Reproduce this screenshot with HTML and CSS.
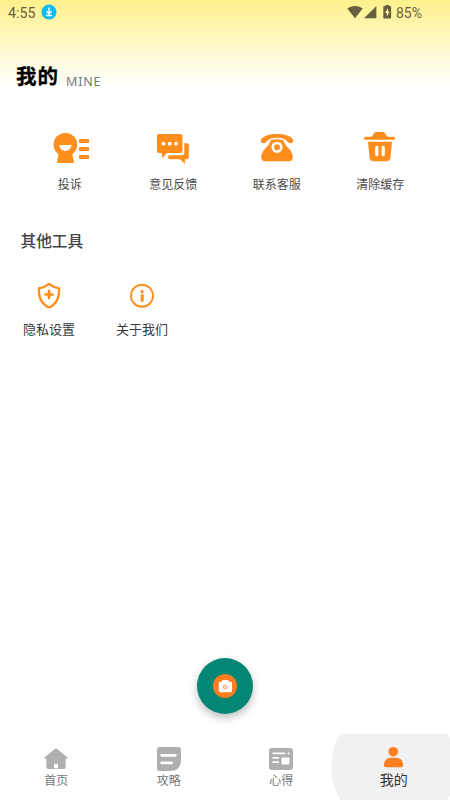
FILE: index.html
```html
<!DOCTYPE html>
<html lang="zh-CN">
<head>
<meta charset="utf-8">
<title>我的</title>
<link rel="stylesheet" href="styles.css">
</head>
<body>
<div class="app">
  <header class="top">
    <div class="status">
      <span class="clock">4:55</span>
      <svg class="download" width="16" height="16" viewBox="0 0 16 16"><circle cx="8" cy="8" r="7.600" fill="#0bbcf5"/><path d="M8 3.500v6M5.500 7.300 8 9.800l2.500-2.500M5 11.500h6" fill="none" stroke="#fff" stroke-width="1.400"/></svg>
      <svg class="signals" width="46" height="14" viewBox="0 0 46 14" fill="#665f3d"><path d="M.3 3.600C4.500.1 11.500.1 15.700 3.600L8 13.200z"/><path d="M29.400 1v12.200H17z"/><path fill-rule="evenodd" d="M37.300 1h1.300V0h3.400v1h1.400q.7 0 .7.700v11q0 .7-.7.700h-6.400q-.7 0-.7-.7v-11q0-.7 1-.7zM41 3l-3 5h1.800v3.700l2.900-5.300H41z"/></svg>
      <span class="charge">85%</span>
    </div>
    <div class="heading"><h1>我的</h1><span>MINE</span></div>
  </header>

  <main>
    <nav class="shortcuts">
      <a class="shortcut">
        <svg width="40" height="36" viewBox="0 0 40 36" fill="#ff8e1c"><circle cx="15.400" cy="14.700" r="11.800"/><path d="M9 22h12.700l2.200 9.500q.2 1.500-1 1.500H8q-1.400 0-1-1.500z"/><path d="M9.300 15h12.200a6.100 6.100 0 0 1-12.200 0z" fill="#fff"/><rect x="29" y="9" width="10" height="4" rx="1"/><rect x="29" y="17" width="10" height="4" rx="1"/><rect x="29" y="25" width="10" height="4" rx="1"/></svg>
        <span>投诉</span>
      </a>
      <a class="shortcut">
        <svg width="40" height="36" viewBox="0 0 40 36" fill="#ff8e1c"><path d="M6 4h21.500q2 0 2 2v15q0 2-2 2H14L9 28.200V23H6q-2 0-2-2V6q0-2 2-2z"/><path d="M31.300 13.200H34q1.800 0 1.800 1.800v12.400q0 1.800-1.800 1.800h-2v4.500l-5.200-4.400H17q-2 0-2-2t2-2h11.800q2.500 0 2.500-2.500z"/><g fill="#fff"><circle cx="10.500" cy="13.700" r="1.900"/><circle cx="16.700" cy="13.700" r="1.900"/><circle cx="23" cy="13.700" r="1.900"/></g></svg>
        <span>意见反馈</span>
      </a>
      <a class="shortcut">
        <svg width="40" height="36" viewBox="0 0 40 36" fill="#ff8e1c"><path d="M4 11.500V9.500Q7.500 4 20 4t16 5.500v2q0 1.600-1.600 1.600h-1.600q-1.300 0-2.300-1.300-2.700-4-10.500-4t-10.500 4q-1 1.300-2.300 1.300H5.600Q4 13.100 4 11.500z"/><path d="M14 10q6-1.600 12 0 2.200 5.600 6 8.800 3.300 3.200 3.800 8.400 0 4-4 4H8.200q-4 0-4-4 .5-5.200 3.800-8.400 3.800-3.200 6-8.800z"/><circle cx="20" cy="17.300" r="4.300" fill="#ff8e1c" stroke="#fff" stroke-width="2.600"/></svg>
        <span>联系客服</span>
      </a>
      <a class="shortcut">
        <svg width="40" height="36" viewBox="0 0 40 36" fill="#ff8e1c"><path d="M5.500 6.700H11q1.300 0 2-2Q14 2 16 2h7q2 0 3 2.700.7 2 2 2h5.500q1.500 0 1.500 1.500t-1.500 1.500h-28Q4 9.700 4 8.200t1.500-1.500z"/><path d="M8 11.800h24L30.500 27.500q-.4 3.700-3.900 3.700H13.400q-3.500 0-3.900-3.700z"/><path d="M16.800 17.300v7.400M23.200 17.300v7.400" stroke="#fff" stroke-width="3.200" stroke-linecap="round"/></svg>
        <span>清除缓存</span>
      </a>
    </nav>

    <section class="tools">
      <h2>其他工具</h2>
      <div class="tool-list">
        <a class="tool">
          <svg width="28" height="28" viewBox="0 0 28 28" fill="none" stroke="#ff8e1c"><path d="M14 2.900Q18 6.300 24.100 7.300q.7 11.500-6.300 17.100-1.800 1.500-3.800 2-2-.5-3.800-2-7-5.600-6.300-17.100Q10 6.300 14 2.900z" stroke-width="2.300" stroke-linejoin="round"/><path d="M14 9.900v7.200M10.400 13.500h7.200" stroke-width="2.600" stroke-linecap="round"/></svg>
          <span>隐私设置</span>
        </a>
        <a class="tool">
          <svg width="28" height="28" viewBox="0 0 28 28"><circle cx="14" cy="14.700" r="11" fill="none" stroke="#ff8e1c" stroke-width="1.900"/><circle cx="14.200" cy="10.700" r="1.600" fill="#ff8e1c"/><rect x="12.700" y="13.300" width="3" height="7.400" rx="1" fill="#ff8e1c"/></svg>
          <span>关于我们</span>
        </a>
      </div>
    </section>
  </main>

  <button class="camera" aria-label="拍照">
    <svg width="24" height="24" viewBox="0 0 24 24"><circle cx="12" cy="12" r="12" fill="#ff7e20"/><path d="M7 7.800h1.500l1-1.800h5.500l1 1.800h1.600q1.400 0 1.400 1.400v7.600q0 1.400-1.400 1.400H7.200q-1.400 0-1.400-1.400V9.200q0-1.400 1.200-1.400z" fill="#fff"/><circle cx="12.200" cy="13" r="2" fill="#ffd9bd" stroke="#f4a56d" stroke-width="1"/></svg>
  </button>

  <nav class="tabs">
    <a class="tab">
      <svg width="26" height="26" viewBox="0 0 26 26"><path fill="#afafaf" d="M12.100 2.700q.9-.8 1.800 0l10.800 9q.8.900-.3.900h-1.800v8.600q0 1.800-1.800 1.800H5.200q-1.800 0-1.800-1.800v-8.600H1.600q-1.100 0-.3-.9z"/><path d="M11 22.200v-3.400q0-1 1-1h2q1 0 1 1v3.400z" fill="#fff"/></svg>
      <span>首页</span>
    </a>
    <a class="tab">
      <svg width="26" height="26" viewBox="0 0 26 26"><path fill="#afafaf" d="M3.500 1h19Q25 1 25 3.500V14q0 11-11 11H3.500Q1 25 1 22.500v-19Q1 1 3.500 1z"/><path d="M5.600 9.300h13.800M5.600 16.800h10" stroke="#fff" stroke-width="2.800" stroke-linecap="round"/></svg>
      <span>攻略</span>
    </a>
    <a class="tab">
      <svg width="26" height="26" viewBox="0 0 26 26"><rect x="1" y="2" width="24" height="22" rx="3" fill="#afafaf"/><path d="M5.200 7.400h11M20.500 7.400h.5M5.200 11.800h5M5.200 16.200h5" stroke="#fff" stroke-width="1.800" stroke-linecap="round"/><rect x="13.500" y="11.500" width="8" height="7" rx="1" fill="#fff"/></svg>
      <span>心得</span>
    </a>
    <a class="tab active">
      <svg width="26" height="26" viewBox="0 0 26 26" fill="#ff7e20"><circle cx="12.300" cy="7.700" r="4.800"/><path d="M9.500 13.800h6q6.500.7 6.600 7.700 0 1.800-1.800 1.800H4.700q-1.800 0-1.800-1.800.1-7 6.600-7.700z"/></svg>
      <span>我的</span>
    </a>
  </nav>
</div>
</body>
</html>
```

FILE: styles.css
```css
* { box-sizing: border-box; }
body { margin: 0; background: #fff; font-family: "Noto Sans CJK SC", sans-serif; }
.app { height: 800px; display: flex; flex-direction: column; position: relative; overflow: hidden; }
.top { height: 92px; background: linear-gradient(#fff18c, #fff 94%); }
.status { height: 25px; display: flex; align-items: center; padding: 0 28px 0 8px; font: 400 14px/25px Roboto, sans-serif; color: #665f3d; }
.clock { width: 32.500px; padding-top: 1px; font-size: 14.200px; }
.download { margin-top: -1px; }
.signals { margin-left: auto; margin-top: -1px; margin-right: 3.500px; }
.charge { padding-top: 1px; }
.heading { display: flex; align-items: baseline; padding: 34px 0 0 16px; }
.heading h1 { margin: 0; font-size: 20.500px; line-height: 32px; font-weight: 700; color: #000; letter-spacing: 1px; -webkit-text-stroke: .3px #000; }
.heading span { margin-left: 7px; font: 12.500px "Noto Sans", sans-serif; color: #777; letter-spacing: .8px; position: relative; top: 2px; }
main { flex: 1; }
.shortcuts { display: grid; grid-template-columns: repeat(4, 1fr); padding: 38px 18px 0; }
.shortcut { display: flex; flex-direction: column; align-items: center; font-size: 12px; line-height: 18px; color: #4a4a4a; }
.shortcut span { margin-top: 9px; }
.tools { padding: 36px 0 0 2.500px; }
.tools h2 { margin: 0 0 0 18px; font-size: 15.700px; line-height: 24px; font-weight: 500; color: #444; }
.tool-list { display: flex; padding-top: 28px; }
.tool { width: 93px; display: flex; flex-direction: column; align-items: center; font-size: 13px; line-height: 20px; color: #3a3a3a; }
.tool span { margin-top: 10px; }
.camera { position: absolute; left: 197px; top: 658px; width: 56px; height: 56px; padding: 0; border: 0; border-radius: 50%; background: #048675; display: grid; place-items: center; box-shadow: 0 4px 8px rgba(0,0,0,.25); }
.tabs { height: 66px; display: grid; grid-template-columns: repeat(4, 1fr); }
.tab { display: flex; flex-direction: column; align-items: center; padding-top: 12px; font-size: 12px; line-height: 18px; color: #777; }
.tab span { margin-top: -1px; }
.tab.active { margin-left: -7px; padding: 10px 0 0 7px; font-size: 14px; line-height: 20px; color: #333; background: radial-gradient(circle at 63px 33px, #f1f1f1 62.500px, transparent 63px); }
```
